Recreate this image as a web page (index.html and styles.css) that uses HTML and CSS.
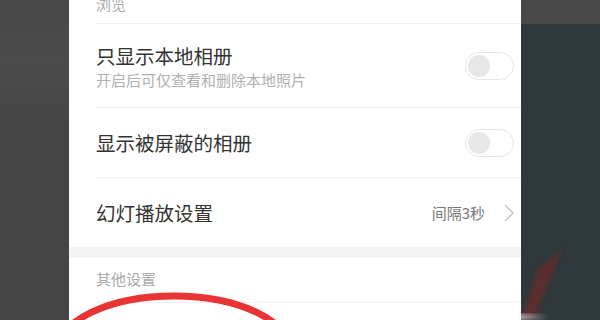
FILE: index.html
```html
<!DOCTYPE html>
<html lang="zh-CN">
<head>
  <meta charset="UTF-8" />
  <title>相册设置</title>
  <link rel="stylesheet" href="styles.css">
</head>
<body>

  <div class="screen">
    <div class="side-left"></div>

    <div class="panel">
      <div class="section-title top">浏览</div>

      <div class="row tall">
        <div class="row-text">
          <div class="row-title">只显示本地相册</div>
          <div class="row-sub">开启后可仅查看和删除本地照片</div>
        </div>
        <span class="switch"><span class="knob"></span></span>
      </div>

      <div class="row">
        <div class="row-title">显示被屏蔽的相册</div>
        <span class="switch"><span class="knob"></span></span>
      </div>

      <div class="row last">
        <div class="row-title">幻灯播放设置</div>
        <div class="row-value">
          间隔3秒
          <svg class="chevron" width="10" height="18" viewBox="0 0 10 18">
            <path d="M1 1 L9 9 L1 17" fill="none" stroke="#c4c4c4" stroke-width="1.4"/>
          </svg>
        </div>
      </div>

      <div class="band"></div>

      <div class="section-title other">其他设置</div>
      <div class="row empty"></div>
    </div>

    <div class="side-right">
      <div class="side-right-top"></div>
      <div class="side-right-bottom"></div>
    </div>

    <!-- marks drawn on the photo -->
    <svg class="marks" width="600" height="320" viewBox="0 0 600 320">
      <defs>
        <filter id="soft"><feGaussianBlur stdDeviation="2.2"/></filter>
        <linearGradient id="streak" x1="0" x2="1">
          <stop offset="0" stop-color="#ffffff" stop-opacity="0.9"/>
          <stop offset="1" stop-color="#ffffff" stop-opacity="0"/>
        </linearGradient>
      </defs>
      <ellipse cx="174" cy="352" rx="117" ry="56" fill="none" stroke="#e83434" stroke-width="7"/>
      <g filter="url(#soft)" opacity="0.75">
        <polygon points="522,318 534,318 554,270 562,248 548,262 539,266" fill="#6a2c2c"/>
      </g>
      <rect x="508" y="314" width="40" height="6" fill="url(#streak)" filter="url(#soft)"/>
    </svg>
  </div>

</body>
</html>
```

FILE: styles.css
```css
* {
  box-sizing: border-box;
}

body {
  margin: 0;
  width: 600px;
  height: 320px;
  overflow: hidden;
  font-family: "Noto Sans CJK SC", "Noto Sans", sans-serif;
  background: #464646;
}

.screen {
  position: relative;
  display: flex;
  width: 600px;
  height: 320px;
}

.side-left {
  width: 69px;
  background: linear-gradient(180deg, #474747 0%, #4b4b4b 20%, #454545 40%, #444444 100%);
}

.panel {
  width: 452px;
  background: #ffffff;
  display: flex;
  flex-direction: column;
}

.side-right {
  flex: 1;
  display: flex;
  flex-direction: column;
}

.side-right-top {
  height: 24px;
  background: #484848;
}

.side-right-bottom {
  flex: 1;
  background: #2f383c;
}

/* section headers */
.section-title {
  margin-left: 27px;
  display: flex;
  align-items: flex-end;
  font-size: 15px;
  line-height: 15px;
  color: #ababab;
  border-bottom: 1px solid #f0f0f0;
}

.section-title.top {
  height: 24px;
  padding-bottom: 12px;
}

.section-title.other {
  height: 45px;
  padding-bottom: 16px;
}

/* rows */
.row {
  margin-left: 27px;
  padding-right: 7px;
  height: 70px;
  display: flex;
  align-items: center;
  justify-content: space-between;
  border-bottom: 1px solid #f0f0f0;
}

.row.tall {
  height: 84px;
}

.row.last {
  height: 69px;
  border-bottom: none;
}

.row.empty {
  flex: 1;
  border-bottom: none;
}

.row-title {
  font-size: 19.5px;
  line-height: 24px;
  color: #333333;
}

.row.tall .row-title {
  margin-top: 2px;
}

.row-sub {
  margin-top: 2px;
  font-size: 15px;
  line-height: 20px;
  color: #b0b0b0;
}

.row-value {
  display: flex;
  align-items: center;
  gap: 19px;
  font-size: 15px;
  color: #777777;
}

.chevron {
  display: block;
}

/* switch */
.switch {
  width: 49px;
  height: 28px;
  border: 1px solid #e6e6e6;
  border-radius: 14px;
  background: #ffffff;
  padding: 2px;
  display: flex;
  align-items: center;
}

.knob {
  width: 22px;
  height: 22px;
  border-radius: 50%;
  background: #e7e7e7;
}

.band {
  height: 11px;
  background: #f4f4f4;
}

.marks {
  position: absolute;
  left: 0;
  top: 0;
  pointer-events: none;
}
```
